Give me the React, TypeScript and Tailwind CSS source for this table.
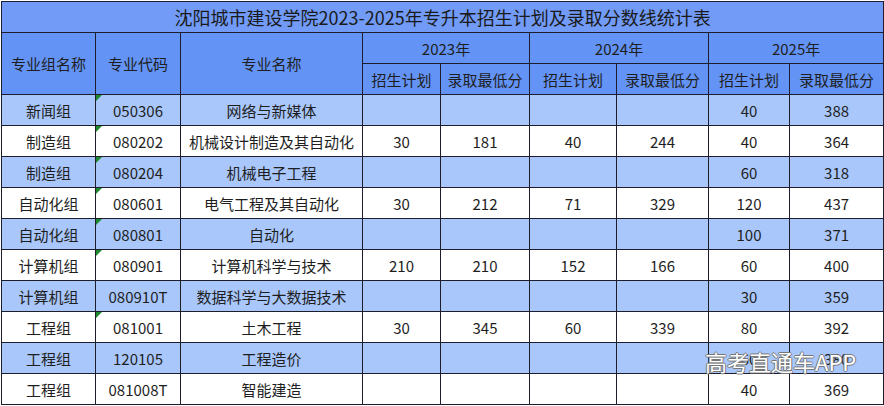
import React from "react";

type Row = {
  g: string;
  code: string;
  name: string;
  v: string[];
  mark: boolean;
};

const rows: Row[] = [
  { g: "新闻组", code: "050306", name: "网络与新媒体", v: ["", "", "", "", "40", "388"], mark: true },
  { g: "制造组", code: "080202", name: "机械设计制造及其自动化", v: ["30", "181", "40", "244", "40", "364"], mark: true },
  { g: "制造组", code: "080204", name: "机械电子工程", v: ["", "", "", "", "60", "318"], mark: true },
  { g: "自动化组", code: "080601", name: "电气工程及其自动化", v: ["30", "212", "71", "329", "120", "437"], mark: true },
  { g: "自动化组", code: "080801", name: "自动化", v: ["", "", "", "", "100", "371"], mark: true },
  { g: "计算机组", code: "080901", name: "计算机科学与技术", v: ["210", "210", "152", "166", "60", "400"], mark: true },
  { g: "计算机组", code: "080910T", name: "数据科学与大数据技术", v: ["", "", "", "", "30", "359"], mark: false },
  { g: "工程组", code: "081001", name: "土木工程", v: ["30", "345", "60", "339", "80", "392"], mark: true },
  { g: "工程组", code: "120105", name: "工程造价", v: ["", "", "", "", "60", "380"], mark: false },
  { g: "工程组", code: "081008T", name: "智能建造", v: ["", "", "", "", "40", "369"], mark: false },
];

const B = "border border-[#1d1d2b]";

export default function App() {
  return (
    <div className="relative w-[884px] h-[406px] bg-white overflow-hidden [font-family:'Noto_Sans_CJK_SC','Noto_Sans',sans-serif] text-[#1e1e1e]">
      <table className="border-collapse table-fixed w-[883px] ml-px mt-px text-[15px] leading-none">
        <colgroup>
          <col className="w-[94px]" />
          <col className="w-[85px]" />
          <col className="w-[182px]" />
          <col className="w-[78px]" />
          <col className="w-[89px]" />
          <col className="w-[87px]" />
          <col className="w-[92px]" />
          <col className="w-[81px]" />
          <col className="w-[94px]" />
        </colgroup>
        <tbody>
          <tr className="h-[31px]">
            <td colSpan={9} className={`${B} bg-[#719bf7] text-center text-[18px] leading-none text-[#1a1a1a] p-0`}>
              沈阳城市建设学院2023-2025年专升本招生计划及录取分数线统计表
            </td>
          </tr>
          <tr className="h-[31px]">
            <td rowSpan={2} className={`${B} bg-[#6393f5] text-center p-0`}>专业组名称</td>
            <td rowSpan={2} className={`${B} bg-[#6393f5] text-center p-0`}>专业代码</td>
            <td rowSpan={2} className={`${B} bg-[#6393f5] text-center p-0`}>专业名称</td>
            <td colSpan={2} className={`${B} bg-[#6393f5] text-center p-0`}>2023年</td>
            <td colSpan={2} className={`${B} bg-[#6393f5] text-center p-0`}>2024年</td>
            <td colSpan={2} className={`${B} bg-[#6393f5] text-center p-0`}>2025年</td>
          </tr>
          <tr className="h-[31px]">
            <td className={`${B} bg-[#6393f5] text-center p-0`}>招生计划</td>
            <td className={`${B} bg-[#6393f5] text-center p-0`}>录取最低分</td>
            <td className={`${B} bg-[#6393f5] text-center p-0`}>招生计划</td>
            <td className={`${B} bg-[#6393f5] text-center p-0`}>录取最低分</td>
            <td className={`${B} bg-[#6393f5] text-center p-0`}>招生计划</td>
            <td className={`${B} bg-[#6393f5] text-center p-0`}>录取最低分</td>
          </tr>
          {rows.map((r, i) => {
            const bg = i % 2 === 0 ? "bg-[#a9c7fb]" : "bg-white";
            return (
              <tr key={i} className="h-[31px]">
                <td className={`${B} ${bg} text-center p-0`}>{r.g}</td>
                <td className={`${B} ${bg} text-center p-0 relative`}>
                  {r.mark && (
                    <span className="absolute left-0 top-0 w-0 h-0 border-t-[6px] border-t-[#1e8a2e] border-r-[6px] border-r-transparent" />
                  )}
                  {r.code}
                </td>
                <td className={`${B} ${bg} text-center p-0`}>{r.name}</td>
                {r.v.map((x, j) => (
                  <td key={j} className={`${B} ${bg} text-center p-0`}>{x}</td>
                ))}
              </tr>
            );
          })}
        </tbody>
      </table>
      <div className="absolute left-[705px] top-[350px] text-[22px] leading-none text-white [text-shadow:1px_0_0_#777,-1px_0_0_#777,0_1px_0_#777,0_-1px_0_#777]">
        高考直通车APP
      </div>
    </div>
  );
}
